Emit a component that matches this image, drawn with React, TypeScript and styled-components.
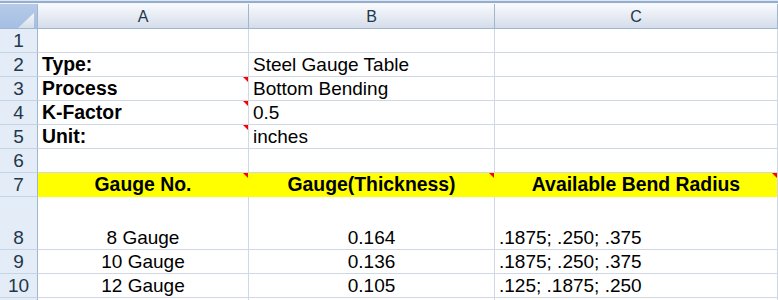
import React from 'react'
import styled, { createGlobalStyle, css } from 'styled-components'

const GlobalStyle = createGlobalStyle`
  html, body {
    margin: 0;
    padding: 0;
    background: #ffffff;
    overflow: hidden;
  }
  body {
    font-family: "Liberation Sans", Arial, sans-serif;
  }
`

type Align = 'left' | 'center'

interface CellData {
  text?: string
  bold?: boolean
  align?: Align
  flag?: boolean
}

interface RowData {
  num: number
  label?: string
  fill?: string
  cells: CellData[]
}

const rows: RowData[] = [
  { num: 1, cells: [{}, {}, {}] },
  { num: 2, cells: [{ text: 'Type:', bold: true }, { text: 'Steel Gauge Table' }, {}] },
  { num: 3, cells: [{ text: 'Process', bold: true, flag: true }, { text: 'Bottom Bending' }, {}] },
  { num: 4, cells: [{ text: 'K-Factor', bold: true, flag: true }, { text: '0.5' }, {}] },
  { num: 5, cells: [{ text: 'Unit:', bold: true, flag: true }, { text: 'inches' }, {}] },
  { num: 6, cells: [{}, {}, {}] },
  {
    num: 7,
    fill: '#ffff00',
    cells: [
      { text: 'Gauge No.', bold: true, align: 'center', flag: true },
      { text: 'Gauge(Thickness)', bold: true, align: 'center', flag: true },
      { text: 'Available Bend Radius', bold: true, align: 'center', flag: true },
    ],
  },
  {
    num: 8,
    cells: [
      { text: '8 Gauge', align: 'center' },
      { text: '0.164', align: 'center' },
      { text: '.1875; .250; .375' },
    ],
  },
  {
    num: 9,
    cells: [
      { text: '10 Gauge', align: 'center' },
      { text: '0.136', align: 'center' },
      { text: '.1875; .250; .375' },
    ],
  },
  {
    num: 10,
    cells: [
      { text: '12 Gauge', align: 'center' },
      { text: '0.105', align: 'center' },
      { text: '.125; .1875; .250' },
    ],
  },
  // row 11 only peeks in at the bottom edge, its number is below the fold
  { num: 11, label: '', cells: [{}, {}, {}] },
]

const columns = ['A', 'B', 'C']

const App = () => {
  return (
    <>
      <GlobalStyle />
      <Window>
        <TopStrip />
        <Sheet>
          <Corner>
            <CornerMark />
          </Corner>
          {columns.map((c) => (
            <ColHead key={c}>{c}</ColHead>
          ))}
          {rows.map((r) => (
            <React.Fragment key={r.num}>
              <RowHead>{r.label ?? r.num}</RowHead>
              {r.cells.map((cell, i) => (
                <Cell
                  key={i}
                  $align={cell.align || 'left'}
                  $bold={!!cell.bold}
                  $fill={r.fill}
                  $last={i === r.cells.length - 1}
                >
                  {cell.text}
                  {cell.flag && <Flag />}
                </Cell>
              ))}
            </React.Fragment>
          ))}
        </Sheet>
      </Window>
    </>
  )
}

export default App

const Window = styled.div`
  width: 778px;
  height: 300px;
  overflow: hidden;
  background: #ffffff;
`

const TopStrip = styled.div`
  height: 4px;
  background: linear-gradient(
    to bottom,
    #dce6f2 0px,
    #dce6f2 1px,
    #95aecd 1px,
    #95aecd 3px,
    #f3f6fa 3px,
    #f3f6fa 4px
  );
`

const Sheet = styled.div`
  display: grid;
  grid-template-columns: 38px 211px 246px 283px;
  grid-template-rows: 25px repeat(7, 24px) 53px 24px 24px 24px;
`

const Corner = styled.div`
  position: relative;
  box-sizing: border-box;
  background: linear-gradient(to bottom, #b7cbe8, #a4bee3);
  border-right: 1px solid #9eb6ce;
  border-bottom: 1px solid #9eb6ce;
`

const CornerMark = styled.div`
  position: absolute;
  left: 18px;
  top: 9px;
  width: 16px;
  height: 15px;
  background: linear-gradient(to bottom, #f4f7fb, #d6dee9);
  clip-path: polygon(100% 0, 100% 100%, 0 100%);
`

const ColHead = styled.div`
  box-sizing: border-box;
  display: flex;
  align-items: center;
  justify-content: center;
  background: linear-gradient(to bottom, #f8fafd, #d5ddea);
  border-right: 1px solid #9eb6ce;
  border-bottom: 1px solid #9eb6ce;
  font-size: 16px;
  color: #22384a;
  padding-top: 1px;
`

const RowHead = styled.div`
  box-sizing: border-box;
  display: flex;
  align-items: flex-end;
  justify-content: center;
  background: #e4ecf7;
  border-right: 1px solid #9eb6ce;
  border-bottom: 1px solid #c5d5e8;
  font-size: 19px;
  line-height: 21px;
  color: #22384a;
  padding-bottom: 1px;
`

const Cell = styled.div<{ $align: Align; $bold: boolean; $fill?: string; $last: boolean }>`
  position: relative;
  box-sizing: border-box;
  display: flex;
  align-items: flex-end;
  justify-content: ${(p) => (p.$align === 'center' ? 'center' : 'flex-start')};
  padding: 0 3px 1px 4px;
  white-space: nowrap;
  overflow: visible;
  color: #000000;
  font-size: ${(p) => (p.$bold ? '19.4px' : '19px')};
  font-weight: ${(p) => (p.$bold ? 700 : 400)};
  line-height: 21px;
  background: ${(p) => p.$fill || '#ffffff'};
  border-right: 1px solid #d0d7e5;
  border-bottom: 1px solid #d0d7e5;
  ${(p) =>
    p.$fill &&
    css`
      border-bottom-color: ${p.$fill};
      border-right-color: ${p.$last ? '#d0d7e5' : p.$fill};
    `}
  ${(p) =>
    p.$align === 'center' &&
    css`
      padding-left: 3px;
    `}
`

const Flag = styled.span`
  position: absolute;
  top: 0;
  right: 0;
  width: 5px;
  height: 5px;
  background: #ff0000;
  clip-path: polygon(0 0, 100% 0, 100% 100%);
`
